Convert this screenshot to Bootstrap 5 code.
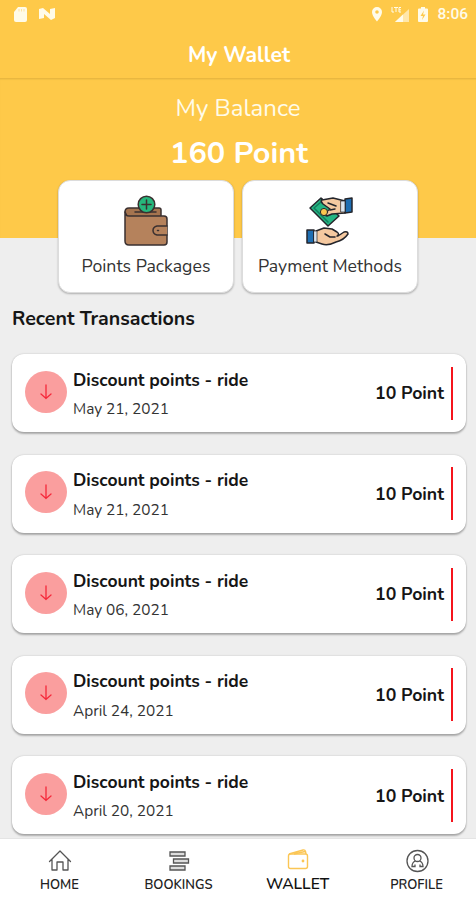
<!DOCTYPE html>
<html lang="en">
<head>
<meta charset="utf-8">
<meta name="viewport" content="width=device-width, initial-scale=1">
<title>My Wallet</title>
<link href="https://cdn.jsdelivr.net/npm/bootstrap@5.3.0/dist/css/bootstrap.min.css" rel="stylesheet">
<style>
body{font-family:Nunito,Lato,"Open Sans",sans-serif;background:#eee;color:#161616;height:900px;line-height:1;white-space:nowrap}
.amber{background:#fec949}
.status{height:28px;padding:0 8px 0 13px;font-family:Roboto,sans-serif;font-size:15.5px;font-weight:500;color:#fffbe9}
.status span{padding-top:1px}
.n-logo{margin-left:11px}
.battery{margin:0 8px 0 7px}
.title-bar{height:50px;font-size:21.2px;font-weight:700;padding:5px 0 0 2px}
.hero{height:160px;border-top:1px solid #e9b740;box-shadow:inset 0 1px 1px #f2c045}
.balance-label{font-size:24px;padding-top:17px;color:#fffbe9}
.balance{font-size:30.7px;font-weight:700;margin-top:18px;padding-left:2px}
.tiles{margin-top:-58px;gap:8px}
.tile{width:176px;height:113px;border-radius:12px;border:1px solid #dcdcdc;box-shadow:0 1px 2px #0004;padding-top:14px}
.tile-text{font-size:17.7px;margin-top:11px;color:#333}
.section-title{font-size:19.6px;font-weight:700;margin:14px 0 0 12px}
.feed{height:486px;padding:23.5px 10px 0 12px;gap:22.6px}
.entry{height:78px;border-radius:12px;box-shadow:0 2px 2px #0004,0 0 2px #0003;padding:0 13px 0 13px}
.down{width:42px;height:42px;border-radius:50%;background:#fa9e9e;margin-top:-3px}
.entry-text{padding:2px 0 0 6px}
.entry-name{font-size:17.5px;font-weight:700}
.entry-date{font-size:15.4px;margin-top:12px;color:#333}
.amount{font-size:17.7px;font-weight:700;padding-top:2px}
.rule{width:2px;height:53px;background:#f5141c;margin-left:7px}
.tabs{height:62px;border-top:1px solid #e4e4e4}
.tab{font-size:13px;font-weight:600;padding-top:10px;color:#222}
.tab span{margin-top:6px}
.tab.current{font-size:15.5px;color:#111;padding-top:9px}
.tab.current span{margin-top:4px}
</style>
</head>
<body class="overflow-hidden d-flex flex-column">
<header class="amber text-white text-center flex-shrink-0">
  <div class="status d-flex align-items-center">
    <svg width="14" height="17" viewBox="0 0 14 17"><path d="M5 1h7q2 0 2 2v11q0 2-2 2H3q-2 0-2-2V6z" fill="#fffbe9"/><path d="M6 3v2.500M8.500 3v2.500M11 3v2.500" stroke="#fee3a0"/></svg>
    <svg class="n-logo" width="18" height="16" viewBox="0 0 18 16"><path d="M1 13V3l4-1 7 6V3l5-1v10l-4 2-7-6v4z" fill="#fffbe9"/></svg>
    <svg class="ms-auto" width="12" height="16" viewBox="0 0 12 16"><path d="M6 1a5 5 0 0 0-5 5c0 4 5 9.500 5 9.500S11 10 11 6a5 5 0 0 0-5-5m0 3.200a1.800 1.800 0 1 1 0 3.600 1.800 1.800 0 0 1 0-3.600" fill="#fffbe9"/></svg>
    <svg class="ms-2" width="19" height="17" viewBox="0 0 19 17"><path d="M4 16 18 3v13z" fill="#ffe7aa"/><path d="M4 16 12 8.500V16z" fill="#fffbe9"/><path d="M1 1v5h2M3 1.500h4M5 1.500V6M10 1.500H8V6h2M8 3.800h2" fill="none" stroke="#fffbe9"/></svg>
    <svg class="battery" width="12" height="17" viewBox="0 0 12 17"><path d="M4 1h4v1.500h2q1 0 1 1V15q0 1-1 1H2q-1 0-1-1V3.500q0-1 1-1h2z" fill="#fffbe9"/><path d="M7 4.500 3.500 10H6l-1 4 3.500-5.500H6z" fill="#fec949"/></svg>
    <span>8:06</span>
  </div>
  <div class="title-bar d-flex align-items-center justify-content-center">My Wallet</div>
  <div class="hero">
    <div class="balance-label">My Balance</div>
    <div class="balance">160 Point</div>
  </div>
</header>
<main class="flex-shrink-0">
  <div class="tiles d-flex justify-content-center">
    <div class="tile bg-white d-flex flex-column align-items-center">
      <svg width="46" height="52" viewBox="0 0 46 52" stroke="#3a3030" stroke-width="1.500" stroke-linejoin="round" stroke-linecap="round"><path d="M2 17q0-4 4-4h30q2 0 2 2v8H5z" fill="#a5744f"/><path d="M2 17q0 4 4 4h35q3 0 3 3v23q0 3-3 3H6q-4 0-4-4z" fill="#b5825c"/><path d="M12 17h21" /><circle cx="23.500" cy="9.500" r="8.300" fill="#26b77c"/><path d="M23.500 5v9M19 9.500h9"/><path d="M44 31H34q-4 1-4 4.500t4 4.500h10" fill="#b5825c"/><path d="M34.500 35.500h1"/></svg>
      <div class="tile-text">Points Packages</div>
    </div>
    <div class="tile bg-white d-flex flex-column align-items-center">
      <svg width="48" height="52" viewBox="0 0 48 52" stroke="#24252b" stroke-width="1.500" stroke-linejoin="round" stroke-linecap="round"><path d="M4 13 15 3l18 18-11 10z" fill="#25b583"/><path d="M8 13l7-6M8 13l14 14" fill="none" stroke="#127d5e"/><path d="M16 5 27 3l12 3v12l-13 1-5 2q-4-1-1-4l4-3-7-5q-3-3-1-5z" fill="#f5c9a0"/><path d="M22 8l8 3M24 15l5-1" fill="none"/><circle cx="18" cy="17" r="3.600" fill="#f9c64f" stroke-width="1"/><path d="M39 4l7-1v14l-7 1z" fill="#1e6eb2"/><path d="M35 6h4v11h-4z" fill="#dce5ee" stroke-width=".7"/><path d="M1 35h7v13H1z" fill="#1e6eb2"/><path d="M10 36l8-3 8 1 5 3q3 2 0 4h1l6-4q4-1 4 2-4 6-12 8-8 4-14 2l-6-2z" fill="#f5c9a0"/><path d="M8 36h3v11H8z" fill="#dce5ee" stroke-width=".7"/><path d="M19 39l5 3h5" fill="none"/></svg>
      <div class="tile-text">Payment Methods</div>
    </div>
  </div>
  <h1 class="section-title">Recent Transactions</h1>
  <div class="feed d-flex flex-column" id="feed"></div>
</main>
<nav class="tabs bg-white d-flex text-center position-relative mt-auto flex-shrink-0">
  <div class="tab col-3 d-flex flex-column align-items-center">
    <svg width="24" height="24" viewBox="0 0 24 24" fill="none" stroke="#555" stroke-width="1.300" stroke-linejoin="round" stroke-linecap="round"><path d="M1.500 12.500 12 2l10.500 10.500M4 10.500V21h5v-8h6v8h5V10.500"/></svg><span>HOME</span>
  </div>
  <div class="tab col-3 d-flex flex-column align-items-center">
    <svg width="24" height="24" viewBox="0 0 24 24" fill="#ddd" stroke="#555" stroke-width="1.300"><path d="M3 3h15v4H3zM6.500 10h15v4h-15zM3 17h15v4H3z"/></svg><span>BOOKINGS</span>
  </div>
  <div class="tab current col-3 d-flex flex-column align-items-center">
    <svg width="24" height="24" viewBox="0 0 24 24" fill="none" stroke="#fbc655" stroke-width="1.400" stroke-linejoin="round"><rect x="2.500" y="6" width="19" height="14.500" rx="2"/><path d="M3 6 17 2q2-.5 2.500 1.500L20 6M8 6l11-2.500"/><circle cx="17" cy="13" r=".7"/></svg><span>WALLET</span>
  </div>
  <div class="tab col-3 d-flex flex-column align-items-center">
    <svg width="24" height="24" viewBox="0 0 24 24" fill="none" stroke="#555" stroke-width="1.300"><circle cx="12.500" cy="12" r="10.500"/><circle cx="12.500" cy="9" r="3.500"/><path d="M10.500 12c-3 1-3.500 3-3.500 5.500h3v-2M14.500 12c3 1 3.500 3 3.500 5.500h-3v-2"/></svg><span>PROFILE</span>
  </div>
</nav>
<script>
document.getElementById('feed').innerHTML = ['May 21, 2021','May 21, 2021','May 06, 2021','April 24, 2021','April 20, 2021'].map(d => `
<div class="entry bg-white d-flex align-items-center flex-shrink-0">
  <div class="down d-flex align-items-center justify-content-center"><svg width="14" height="18" viewBox="0 0 14 18" fill="none" stroke="#f5283a" stroke-width="1.300" stroke-linecap="round"><path d="M7 2v13.500M2 11l5 4.500 5-4.500"/></svg></div>
  <div class="entry-text flex-grow-1"><div class="entry-name">Discount points - ride</div><div class="entry-date">${d}</div></div>
  <div class="amount">10 Point</div><div class="rule"></div>
</div>`).join('');
</script>
<script src="https://cdn.jsdelivr.net/npm/bootstrap@5.3.0/dist/js/bootstrap.bundle.min.js"></script>
</body>
</html>
